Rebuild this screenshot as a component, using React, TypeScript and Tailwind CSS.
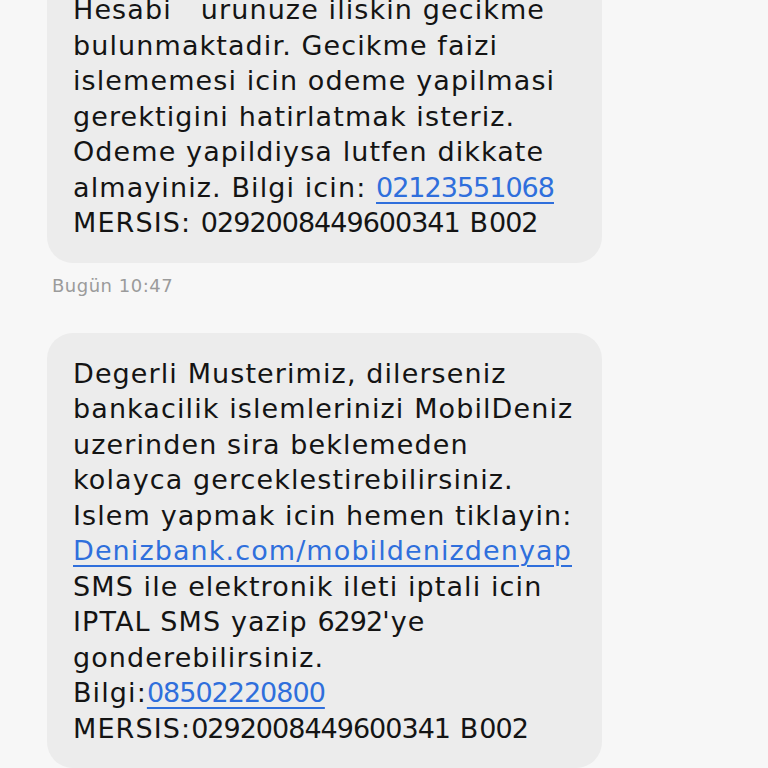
const first = [
  "Hesabi   urunuze iliskin gecikme",
  "bulunmaktadir. Gecikme faizi",
  "islememesi icin odeme yapilmasi",
  "gerektigini hatirlatmak isteriz.",
  "Odeme yapildiysa lutfen dikkate",
];

const second = [
  "Degerli Musterimiz, dilerseniz",
  "bankacilik islemlerinizi MobilDeniz",
  "uzerinden sira beklemeden",
  "kolayca gerceklestirebilirsiniz.",
  "Islem yapmak icin hemen tiklayin:",
];

// rakamlar orijinal fontta daha dar, harfler daha geniş
function T({ text }: { text: string }) {
  const parts = text.split(/(\d+)/);
  return (
    <>
      {parts.map((p, i) =>
        /^\d+$/.test(p) ? (
          <span key={i} className="tracking-[-1px]">
            {p}
          </span>
        ) : (
          <span key={i}>{p}</span>
        )
      )}
    </>
  );
}

function Link({ children }: { children: string }) {
  return (
    <span className="text-[#2f6fdc] underline decoration-[1.5px] underline-offset-[5px]">
      <T text={children} />
    </span>
  );
}

export default function App() {
  return (
    <div
      className="h-[768px] w-[768px] overflow-hidden bg-[#f7f7f7] text-[#141414]"
      style={{ fontFamily: '"DejaVu Sans", sans-serif' }}
    >
      <div className="-mt-[31px] flex flex-col">
        {/* eski mesaj */}
        <div className="ml-[47px] w-[555px] rounded-[26px] bg-[#ececec] pl-[26px] pt-[23px] pb-[22px] text-[27px] leading-[35.5px] tracking-[1.1px] whitespace-pre">
          {first.map((l, i) => (
            <div key={i}>{l}</div>
          ))}
          <div>
            almayiniz. Bilgi icin: <Link>02123551068</Link>
          </div>
          <div>
            <T text="MERSIS: 0292008449600341 B002" />
          </div>
        </div>

        <div className="ml-[52px] mt-[12px] text-[18px] leading-[22px] tracking-[0.5px] text-[#9b9b9b]">Bugün 10:47</div>

        {/* yeni mesaj */}
        <div className="ml-[47px] mt-[36px] w-[555px] rounded-[26px] bg-[#ececec] pl-[26px] pt-[23px] pb-[22px] text-[27px] leading-[35.5px] tracking-[1.1px] whitespace-pre">
          {second.map((l, i) => (
            <div key={i}>{l}</div>
          ))}
          <div>
            <Link>Denizbank.com/mobildenizdenyap</Link>
          </div>
          <div>SMS ile elektronik ileti iptali icin</div>
          <div>
            <T text="IPTAL SMS yazip 6292'ye" />
          </div>
          <div>gonderebilirsiniz.</div>
          <div>
            Bilgi:<Link>08502220800</Link>
          </div>
          <div>
            <T text="MERSIS:0292008449600341 B002" />
          </div>
        </div>
      </div>
    </div>
  );
}
